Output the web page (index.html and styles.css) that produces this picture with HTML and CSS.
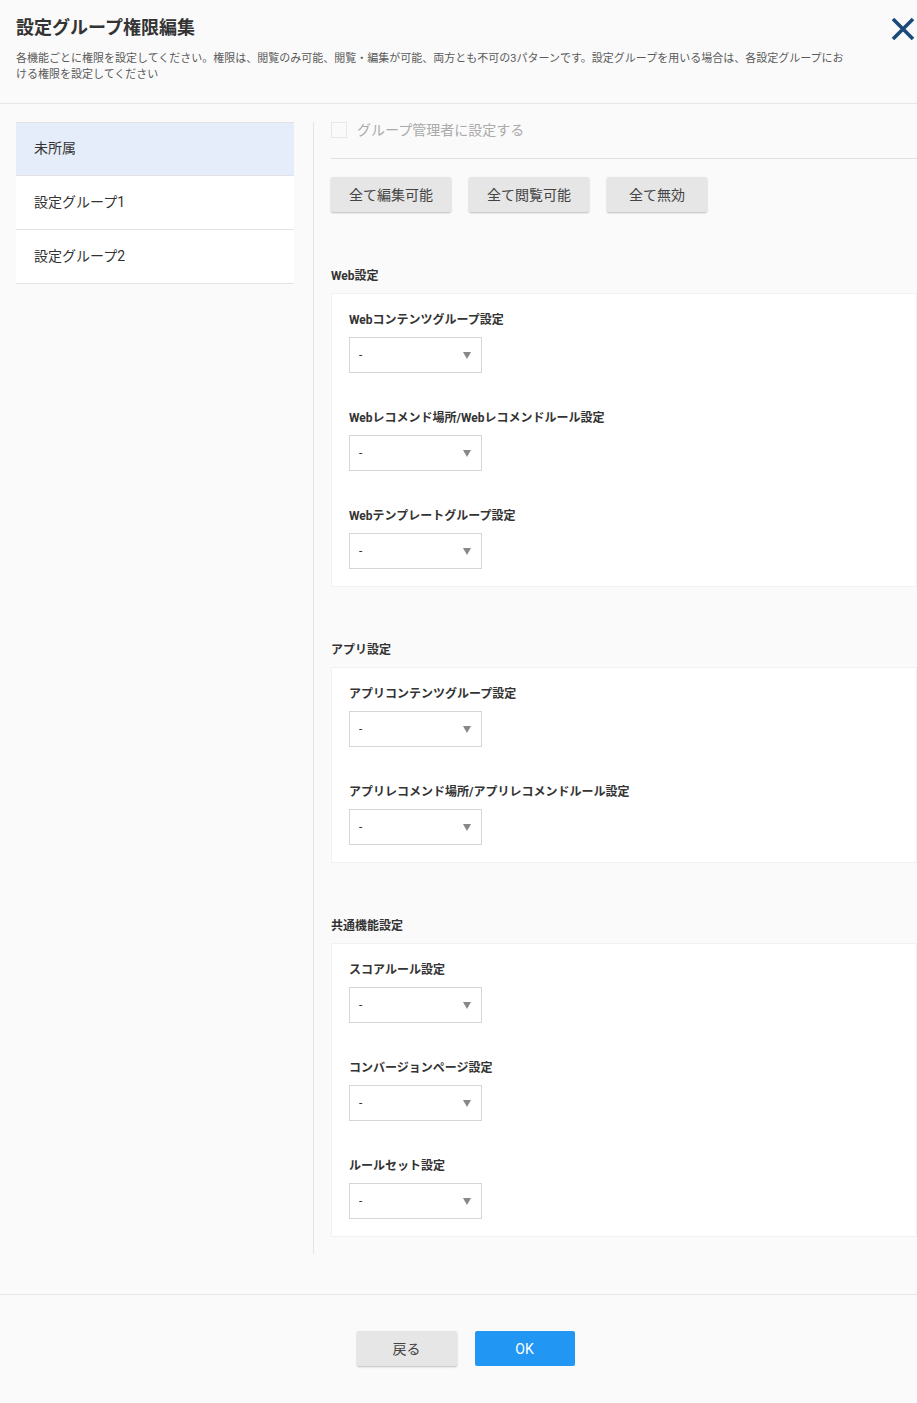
FILE: index.html
```html
<!DOCTYPE html>
<html lang="ja">
<head>
<meta charset="utf-8">
<title>設定グループ権限編集</title>
<link rel="stylesheet" href="styles.css">
</head>
<body>
<div class="page">
  <header class="header">
    <div class="header-text">
      <h1 class="title">設定グループ権限編集</h1>
      <p class="desc">各機能ごとに権限を設定してください。権限は、閲覧のみ可能、閲覧・編集が可能、両方とも不可の3パターンです。設定グループを用いる場合は、各設定グループにおける権限を設定してください</p>
    </div>
    <button class="close" aria-label="閉じる">
      <svg width="24" height="24" viewBox="0 0 24 24"><path d="M2 2 L22 22 M22 2 L2 22" stroke="#1b4a7a" stroke-width="3.6" fill="none"/></svg>
    </button>
  </header>

  <div class="main">
    <nav class="sidebar">
      <div class="side-item active">未所属</div>
      <div class="side-item">設定グループ1</div>
      <div class="side-item">設定グループ2</div>
    </nav>

    <section class="content">
      <label class="check-row">
        <span class="checkbox"></span>
        <span class="check-label">グループ管理者に設定する</span>
      </label>
      <hr class="rule">
      <div class="bulk">
        <button class="btn">全て編集可能</button>
        <button class="btn">全て閲覧可能</button>
        <button class="btn small">全て無効</button>
      </div>

      <div class="section">
        <h2 class="section-title">Web設定</h2>
        <div class="card">
          <div class="field">
            <div class="field-label">Webコンテンツグループ設定</div>
            <div class="select"><span>-</span><i class="arrow"></i></div>
          </div>
          <div class="field">
            <div class="field-label">Webレコメンド場所/Webレコメンドルール設定</div>
            <div class="select"><span>-</span><i class="arrow"></i></div>
          </div>
          <div class="field">
            <div class="field-label">Webテンプレートグループ設定</div>
            <div class="select"><span>-</span><i class="arrow"></i></div>
          </div>
        </div>
      </div>

      <div class="section">
        <h2 class="section-title">アプリ設定</h2>
        <div class="card">
          <div class="field">
            <div class="field-label">アプリコンテンツグループ設定</div>
            <div class="select"><span>-</span><i class="arrow"></i></div>
          </div>
          <div class="field">
            <div class="field-label">アプリレコメンド場所/アプリレコメンドルール設定</div>
            <div class="select"><span>-</span><i class="arrow"></i></div>
          </div>
        </div>
      </div>

      <div class="section">
        <h2 class="section-title">共通機能設定</h2>
        <div class="card">
          <div class="field">
            <div class="field-label">スコアルール設定</div>
            <div class="select"><span>-</span><i class="arrow"></i></div>
          </div>
          <div class="field">
            <div class="field-label">コンバージョンページ設定</div>
            <div class="select"><span>-</span><i class="arrow"></i></div>
          </div>
          <div class="field">
            <div class="field-label">ルールセット設定</div>
            <div class="select"><span>-</span><i class="arrow"></i></div>
          </div>
        </div>
      </div>
    </section>
  </div>

  <footer class="footer">
    <button class="btn back">戻る</button>
    <button class="btn ok">OK</button>
  </footer>
</div>
</body>
</html>
```

FILE: styles.css
```css
* { box-sizing: border-box; }
html, body { margin: 0; padding: 0; }
body {
  background: #fafafa;
  font-family: Roboto, "Noto Sans CJK JP", sans-serif;
  color: #333;
}
.page { width: 917px; }

.header {
  display: flex;
  justify-content: space-between;
  align-items: flex-start;
  padding: 16px 2px 0 16px;
  height: 104px;
  border-bottom: 1px solid #e6e6e6;
}
.header-text { width: 834px; }
.title {
  margin: 0;
  height: 24px;
  font-size: 18px;
  line-height: 24px;
  font-weight: 700;
  color: #333;
}
.desc {
  margin: 11px 0 0;
  font-size: 11px;
  line-height: 16px;
  color: #5a5a5a;
}
.close {
  border: 0;
  background: transparent;
  padding: 0;
  margin-top: 1px;
  width: 24px;
  height: 24px;
  cursor: pointer;
}
.close svg { display: block; }

.main {
  display: flex;
  align-items: flex-start;
  padding: 18px 0 0 16px;
}
.sidebar {
  width: 278px;
  flex: none;
  margin-right: 19px;
}
.side-item {
  height: 54px;
  display: flex;
  align-items: center;
  padding: 0 0 1px 18px;
  font-size: 14px;
  line-height: 20px;
  color: #333;
  background: #fff;
  border-bottom: 1px solid #e3e3e3;
}
.side-item.active {
  background: #e6edfa;
  border-top: 1px solid #e3e3e3;
  padding-bottom: 3px;
}

.content {
  flex: 1;
  border-left: 1px solid #e3e3e3;
  padding: 0 0 17px 17px;
}
.check-row {
  display: flex;
  align-items: center;
  height: 16px;
}
.checkbox {
  width: 16px;
  height: 16px;
  border: 1px solid #e8e8e8;
  background: #fafafa;
  margin-right: 10px;
  flex: none;
}
.check-label {
  font-size: 14px;
  line-height: 16px;
  color: #aaa;
}
.rule {
  margin: 20px 0 0;
  border: 0;
  border-top: 1px solid #e3e3e3;
}
.bulk {
  display: flex;
  gap: 18px;
  margin-top: 18px;
}
.btn {
  height: 35px;
  width: 120px;
  border: 0;
  border-radius: 2px;
  background: #e6e6e6;
  box-shadow: 0 1px 2px rgba(0,0,0,0.25);
  font-family: inherit;
  font-size: 14px;
  line-height: 20px;
  color: #444;
  padding: 0;
  cursor: pointer;
}
.btn.small { width: 100px; }

.section { margin-top: 53px; }
.bulk + .section { margin-top: 54px; }
.section-title {
  margin: 0 0 9px;
  height: 18px;
  font-size: 12px;
  line-height: 20px;
  font-weight: 700;
  color: #333;
}
.card {
  background: #fff;
  border: 1px solid #f2f2f2;
  padding: 17px;
}
.field + .field { margin-top: 36px; }
.field-label {
  height: 16px;
  font-size: 12px;
  line-height: 18px;
  font-weight: 700;
  color: #333;
  white-space: nowrap;
}
.select {
  margin-top: 10px;
  width: 133px;
  height: 36px;
  border: 1px solid #d6d6d6;
  background: #fff;
  display: flex;
  align-items: center;
  justify-content: space-between;
  padding: 0 10px 0 9px;
  font-size: 12px;
  line-height: 16px;
  color: #333;
}
.arrow {
  width: 0;
  height: 0;
  border-left: 4px solid transparent;
  border-right: 4px solid transparent;
  border-top: 7px solid #888;
}

.footer {
  margin-top: 40px;
  border-top: 1px solid #e6e6e6;
  display: flex;
  justify-content: center;
  gap: 18px;
  padding: 36px 0 37px 14px;
}
.btn.back { width: 100px; }
.btn.ok {
  width: 100px;
  background: #2196f3;
  color: #fff;
  box-shadow: none;
}
```
